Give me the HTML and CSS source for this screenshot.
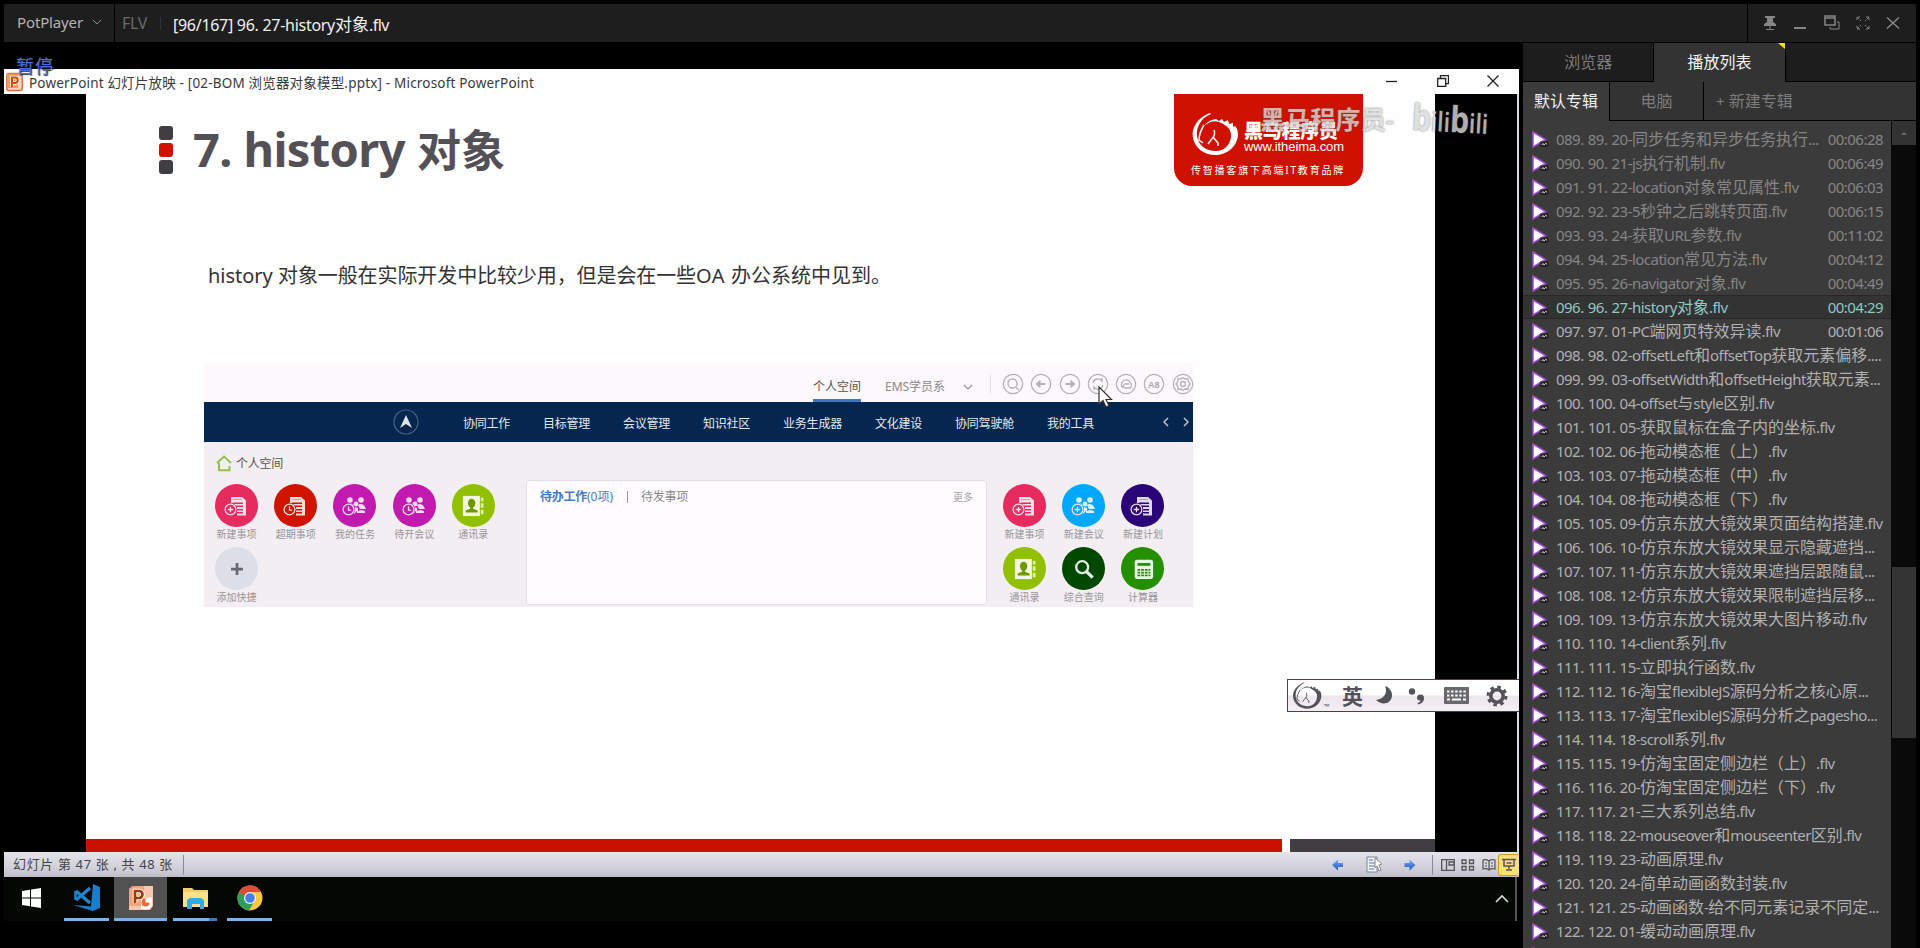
FILE: index.html
```html
<!DOCTYPE html>
<html lang="zh-CN">
<head>
<meta charset="utf-8">
<title>PotPlayer</title>
<link rel="stylesheet" href="styles.css">
</head>
<body>
<svg class="defs" aria-hidden="true">
  <defs>
    <symbol id="doc" viewBox="0 0 24 20"><path d="M6 1h11l4 3.500v15H12v-2h6v-1.500h-6v-1.500h6V13h-6v-2h6V9.500H9V8h9V6.500H8.500L6 8z" fill="#fff" opacity=".85"/><path d="M8 3.500h9" stroke="#888" opacity=".6"/></symbol>
    <symbol id="badge-plus" viewBox="0 0 12 12"><circle cx="6" cy="6" r="5" fill="none" stroke="#f6dfe8" stroke-width="1.200"/><path d="M6 3.500v5M3.500 6h5" stroke="#f6dfe8" stroke-width="1.200"/></symbol>
    <symbol id="badge-clock" viewBox="0 0 12 12"><circle cx="6" cy="6" r="5" fill="none" stroke="#f6dfe8" stroke-width="1.200"/><path d="M6 3v3.500h2.500" fill="none" stroke="#f6dfe8" stroke-width="1.200"/></symbol>
    <symbol id="people" viewBox="0 0 24 20"><g fill="#fff" opacity=".85"><circle cx="7" cy="4" r="2.800"/><circle cx="18" cy="4" r="2.800"/><circle cx="13" cy="8" r="2.400"/><path d="M3 10c1-3 6-3 8-1l-1 3zM15 9c2-2 6-1 7 2l1 2h-6zM10 14l2-3 3 1v3l3-1 4 1v2h-8v-2l-3 3z"/></g></symbol>
    <symbol id="book" viewBox="0 0 24 24"><rect x="1" y="1" width="18.500" height="22" fill="#fff" opacity=".88"/><path d="M20.500 3h3v4h-3zM20.500 9h3v5h-3zM20.500 16h3v5h-3z" fill="#fff" opacity=".7"/><ellipse cx="10.500" cy="9" rx="4" ry="5" fill="#6c9800"/><path d="M9 11h3v4l5 2v2H4v-2l5-2z" fill="#6c9800"/></symbol>
    <symbol id="play" viewBox="0 0 17 17"><path d="M1 1l12.500 7.500L1 16z" fill="#fff" stroke="#a24bd0" stroke-width="1.500"/><rect x="8" y="10.500" width="8.500" height="5.500" rx="1" fill="#262626"/><path d="M9.500 14l1.500-1.500 1 1.500 1.500-1.500 1.500.5" fill="none" stroke="#ccc" stroke-width="1"/></symbol>
    <symbol id="horse" viewBox="0 0 48 46"><path d="M19 2C6 7 0 17 2 27c2 10 11 17 22 17 12 0 22-8 23-20 0-4-1-7-3-9l-2 1 0-4-4 1-1-4-4 2-2-3-3 2-3-2c-6 1-10 4-12 7 5-4 10-6 15-4 8 3 13 8 12 15-1 8-7 14-15 14-10 0-18-6-19-15C5 16 10 7 20 3z" fill="currentColor"/><path d="M13 14c-3 5-5 10-5 15l4 3M23 19c2 4 0 7-3 10l-3 4M22 26l5 6v3" fill="none" stroke="currentColor" stroke-width="1.500"/></symbol>
    <symbol id="ring" viewBox="0 0 22 22"><circle cx="11" cy="11" r="9.700" fill="none" stroke="#b4b0b4" stroke-width="1.200"/></symbol>
    <linearGradient id="arrow" x2="0" y2="1"><stop offset="0" stop-color="#79aef5"/><stop offset="1" stop-color="#1c53c8"/></linearGradient>
  </defs>
</svg>

<header class="titlebar">
  <div class="app"><span data-w="66">PotPlayer</span><svg width="10" height="6" viewBox="0 0 10 6"><path d="M.8.800L5 5 9.200.800" fill="none" stroke="#8a8a8a"/></svg></div>
  <div class="file"><span class="kind" data-w="25">FLV</span><i></i><span class="name"><span data-w="162">[96/167] 96. 27-history</span><span class="cj">对象</span><span data-w="20">.flv</span></span></div>
  <div class="controls">
    <svg width="14" height="16" viewBox="0 0 14 16"><path d="M2 1h10v2h-2v4l3 2v2H1V9l3-2V3H2z" fill="#858585"/><path d="M7 11v4M3 14.500h8" stroke="#858585"/></svg>
    <svg width="14" height="16" viewBox="0 0 14 16"><path d="M1 13h12" stroke="#858585" stroke-width="2"/></svg>
    <svg width="16" height="16" viewBox="0 0 16 16"><path d="M1 1h10v9H1zM1 3h10" fill="none" stroke="#858585" stroke-width="1.500"/><path d="M13 7h2v7H6v-2" fill="none" stroke="#858585"/></svg>
    <svg width="14" height="16" viewBox="0 0 14 16"><path d="M1 5V2h3M10 2h3v3M13 11v3h-3M4 14H1v-3M1 2l4 4M13 2L9 6M13 14l-4-4M1 14l4-4" fill="none" stroke="#858585" stroke-dasharray="3 1"/></svg>
    <svg width="14" height="16" viewBox="0 0 14 16"><path d="M1 2.500l12 11M13 2.500L1 13.500" stroke="#909090" stroke-width="1.200"/></svg>
  </div>
</header>

<div class="main">
<section class="video">
  <div class="pause">暂停</div>
  <div class="ppt-bar">
    <svg width="18" height="20" viewBox="0 0 18 20"><rect x=".8" y="1.500" width="15.500" height="17" rx="2" fill="#fbd3bb" stroke="#dc7040" stroke-width="1.500"/><rect x="1" y="2" width="11" height="14" fill="#f39a63"/><path d="M6 15V5.500h3a2.700 2.700 0 010 5.500H6" fill="none" stroke="#fff" stroke-width="3.500"/><path d="M6 15V5.500h3a2.700 2.700 0 010 5.500H6" fill="none" stroke="#c64d12" stroke-width="2"/></svg>
    <span class="ppt-title" data-w="505">PowerPoint 幻灯片放映 - [02-BOM 浏览器对象模型.pptx] - Microsoft PowerPoint</span>
    <div class="win">
      <svg width="12" height="12"><path d="M0 6.500h11" stroke="#222" stroke-width="1.300"/></svg>
      <svg width="12" height="12"><path d="M.7 3.500h8v8h-8zM3.500 3V.700h8v8H9" fill="none" stroke="#222" stroke-width="1.300"/></svg>
      <svg width="12" height="12"><path d="M.5.500l11 11M11.500.500l-11 11" stroke="#222" stroke-width="1.300"/></svg>
    </div>
  </div>
  <div class="stage">
    <div class="slide">
      <div class="slide-head">
        <div class="dots"><i></i><i></i><i></i></div>
        <h1><span data-w="212">7. history</span><span class="h-cj">对象</span></h1>
        <div class="brand">
          <div class="brand-top"><svg width="48" height="46"><use href="#horse"/></svg><div><b data-w="100">黑马程序员</b><em data-w="100">www.itheima.com</em></div></div>
          <p data-w="154">传智播客旗下高端IT教育品牌</p>
        </div>
      </div>
      <p class="para"><span data-w="70">history </span><span data-w="418">对象一般在实际开发中比较少用，但是会在一些</span><span data-w="35">OA </span><span data-w="160">办公系统中见到。</span></p>
      <div class="oa">
        <div class="oa-top">
          <span class="on" data-w="48">个人空间</span><span class="ems" data-w="60">EMS学员系</span>
          <svg class="chev" width="10" height="6"><path d="M1 1l4 4 4-4" fill="none" stroke="#999" stroke-width="1.300"/></svg>
          <div class="rings">
            <svg viewBox="0 0 22 22"><use href="#ring"/><circle cx="10.500" cy="10.500" r="4.500"/><path d="M14 14l3 3"/></svg>
            <svg viewBox="0 0 22 22"><use href="#ring"/><path d="M15.500 11H8M10.500 8L7 11l3.500 3" stroke-width="2"/></svg>
            <svg viewBox="0 0 22 22"><use href="#ring"/><path d="M6.500 11H14M11.500 8l3.500 3-3.500 3" stroke-width="2"/></svg>
            <svg viewBox="0 0 22 22"><use href="#ring"/><path d="M6 10a5 5 0 019-2V5M16 12a5 5 0 01-9 2v3"/></svg>
            <svg viewBox="0 0 22 22"><use href="#ring"/><path d="M8 14.500a3.500 3.500 0 010-6 4 4 0 017 1c2 1 2 5-.5 5.500H10a2 2 0 011-4h3"/></svg>
            <svg viewBox="0 0 22 22"><use href="#ring"/><text x="5" y="14.500">A8</text></svg>
            <svg viewBox="0 0 22 22"><use href="#ring"/><circle cx="11" cy="11" r="2.500"/><path d="M11 4.500l2 1.500 3-.3.300 2.800 1.700 2.500-1.700 2.300-.3 2.900-3-.2-2 1.500-2-1.500-3 .2-.3-2.900L4 11l1.700-2.500.3-2.800 3 .3z"/></svg>
          </div>
        </div>
        <nav class="oa-nav">
          <svg width="26" height="26" viewBox="0 0 26 26"><circle cx="13" cy="13" r="12" fill="none" stroke="#47607f" stroke-width="1.200"/><path d="M13 6l6 13-6-4-6 4z" fill="#dfe4ec"/></svg>
          <span data-w="47">协同工作</span><span data-w="47">目标管理</span><span data-w="47">会议管理</span><span data-w="47">知识社区</span><span data-w="59">业务生成器</span><span data-w="47">文化建设</span><span data-w="59">协同驾驶舱</span><span data-w="47">我的工具</span>
          <svg class="nx" width="28" height="10"><path d="M6 1L2 5l4 4M22 1l4 4-4 4" fill="none" stroke="#b9c2d0" stroke-width="1.500"/></svg>
        </nav>
        <div class="oa-body">
          <div class="left">
            <div class="home"><svg width="16" height="17" viewBox="0 0 16 17"><path d="M3 8v7.300h10.500V11M1 8l7-6.500L15 8" fill="none" stroke="#8fc253" stroke-width="2"/></svg><span data-w="47">个人空间</span></div>
            <div class="apps">
              <div><i class="pink"><svg class="g"><use href="#doc"/></svg><svg class="b"><use href="#badge-plus"/></svg></i>新建事项</div>
              <div><i class="red"><svg class="g"><use href="#doc"/></svg><svg class="b"><use href="#badge-clock"/></svg></i>超期事项</div>
              <div><i class="purple"><svg class="g"><use href="#people"/></svg><svg class="b"><use href="#badge-clock"/></svg></i>我的任务</div>
              <div><i class="purple"><svg class="g"><use href="#people"/></svg><svg class="b"><use href="#badge-clock"/></svg></i>待开会议</div>
              <div><i class="lime"><svg class="g"><use href="#book"/></svg></i>通讯录</div>
              <div><i class="pale"><svg class="g" viewBox="0 0 24 24"><path d="M12 5.500v13M5.500 12h13" stroke="#68686f" stroke-width="3"/></svg></i>添加快捷</div>
            </div>
          </div>
          <div class="card"><b data-w="47">待办工作</b><span class="blue" data-w="26">(0项)</span><span class="bar"></span><span class="wait" data-w="47">待发事项</span><span class="more">更多</span></div>
          <div class="apps right">
            <div><i class="pink"><svg class="g"><use href="#doc"/></svg><svg class="b"><use href="#badge-plus"/></svg></i>新建事项</div>
            <div><i class="sky"><svg class="g"><use href="#people"/></svg><svg class="b"><use href="#badge-plus"/></svg></i>新建会议</div>
            <div><i class="navy"><svg class="g"><use href="#doc"/></svg><svg class="b"><use href="#badge-plus"/></svg></i>新建计划</div>
            <div><i class="lime"><svg class="g"><use href="#book"/></svg></i>通讯录</div>
            <div><i class="forest"><svg class="g" viewBox="0 0 24 24"><circle cx="10" cy="10" r="6.500" fill="none" stroke="#e6efe6" stroke-width="2.500"/><path d="M14.500 14.500l7 7" stroke="#e6efe6" stroke-width="3.500"/></svg></i>综合查询</div>
            <div><i class="green"><svg class="g" viewBox="0 0 24 24"><rect x="3" y="2" width="20" height="21" rx="2.500" fill="#e9f4e6"/><path d="M6 7h14" stroke="#249000" stroke-width="3"/><path d="M6 13h14M6 16h14M6 19h14" stroke="#249000" stroke-width="1.800" stroke-dasharray="3 1"/></svg></i>计算器</div>
          </div>
        </div>
        <svg class="cursor" width="15" height="22" viewBox="0 0 15 22"><path d="M1 1v17l4-3.500 3 6.500 3-1.500-3-6h5.500z" fill="#fff" stroke="#333" stroke-width="1.200"/></svg>
      </div>
      <div class="slide-foot"><i></i><i></i></div>
    </div>
    <div class="watermark"><span data-w="134">黑马程序员-</span><span class="bili"><b>b</b>ili<b>b</b>ili</span></div>
    <div class="ime">
      <svg class="hm" width="30" height="29"><use href="#horse"/></svg><small>™</small><b>英</b>
      <svg width="17" height="19" viewBox="0 0 17 19"><path d="M9 0c3 7-1 13-9 14 6 6 16 4 16-5 0-4-3-8-7-9z" fill="#55535a"/></svg>
      <svg width="18" height="18" viewBox="0 0 18 18"><circle cx="4" cy="4.500" r="3.200" fill="#55535a"/><path d="M9 11a3.500 3.500 0 117 0c0 4-3 6-6 6.500l-.5-1.500c2-.5 3-1.500 3-2.500-2 .3-3.500-.8-3.500-2.500z" fill="#55535a"/></svg>
      <svg width="25" height="17" viewBox="0 0 25 17"><rect width="25" height="17" rx="1" fill="#6a686e"/><path d="M3 4.500h19M3 8.500h19" stroke="#fff" stroke-width="2.200" stroke-dasharray="2.400 1.700"/><path d="M3 12.500h3M8 12.500h9M19 12.500h3" stroke="#fff" stroke-width="2"/></svg>
      <svg width="22" height="22" viewBox="0 0 22 22"><circle cx="11" cy="11" r="6.200" fill="none" stroke="#55535a" stroke-width="3.600"/><circle cx="11" cy="11" r="9" fill="none" stroke="#55535a" stroke-width="3" stroke-dasharray="3.534 3.534"/></svg>
    </div>
  </div>
  <div class="status">
    <span class="count" data-w="160">幻灯片 第 47 张 , 共 48 张</span><i class="sep"></i>
    <div class="views">
      <svg width="12" height="12"><path d="M0 6l6-5.500V4h5v4H6v3.500z" fill="url(#arrow)"/></svg>
      <svg class="pg" width="19" height="18" viewBox="0 0 19 18"><path d="M2 1h10v15H2z" fill="#eef2f8" stroke="#7d8596"/><path d="M4 4h4M4 7h6M4 10h6M4 13h5" stroke="#5c7ba8"/><path d="M10 2l7 6-3 1 2 5-2 1-2-5-2 2z" fill="#fff" stroke="#888"/></svg>
      <svg width="12" height="12"><path d="M11.500 6l-6-5.500V4H.5v4h5v3.500z" fill="url(#arrow)"/></svg>
      <i class="sep"></i>
      <svg width="14" height="12"><path d="M.7.700h12.600v10.600H.700zM5.500 1v10M8 3h5v3H8z" fill="none" stroke="#555" stroke-width="1.300"/></svg>
      <svg width="14" height="12"><path d="M1 1h4v3.500H1zM8.500 1h4v3.500h-4zM1 7.500h4V11H1zM8.500 7.500h4V11h-4z" fill="none" stroke="#555" stroke-width="1.300"/></svg>
      <svg width="14" height="12"><path d="M7 2C5 .5 3 .500 1 1v9c2-.5 4-.5 6 1 2-1.500 4-1.500 6-1V1c-2-.5-4-.5-6 1zM7 2v9M3 4h2M3 7h2M9 4h2M9 7h2" fill="none" stroke="#555" stroke-width="1.200"/></svg>
      <div class="show"><svg width="14" height="13"><path d="M0 1.500h14M2 2v6h10V2M7 8v3M4 12h6M4.500 5h5" fill="none" stroke="#555" stroke-width="1.500"/></svg></div>
    </div>
  </div>
  <div class="taskbar">
    <div class="task start"><svg width="19" height="20" viewBox="0 0 19 20"><path d="M0 3l8-1.200V9.500H0zM9 1.600L19 0v9.500H9zM0 10.500h8v7.700L0 17zM9 10.500h10V20l-10-1.600z" fill="#fff"/></svg></div>
    <div class="task code"><svg width="27" height="27" viewBox="0 0 27 27"><path d="M20 0l7 3v21l-7 3L0 21l18 1.500z" fill="#1580cf"/><path d="M3 7l14 12M3 16L17 4" stroke="#1c87d4" stroke-width="3.200"/><path d="M2.500 7v9" stroke="#1c87d4" stroke-width="2.500"/></svg></div>
    <div class="task active"><svg width="26" height="26" viewBox="0 0 26 26"><path d="M5 1h20v20l-3 4H1V4z" fill="#f7c8ae"/><path d="M1 4l4-3h11v20H1z" fill="#f2a47c"/><path d="M13 15l11-3v9l-3 3h-8z" fill="#fff"/><path d="M17.500 13.500a4 4 0 104 4h-4z" fill="#e46b3d"/><path d="M7 18V6h4a3.500 3.500 0 010 7H7" fill="none" stroke="#fff" stroke-width="4.500"/><path d="M7 18V6h4a3.500 3.500 0 010 7H7" fill="none" stroke="#9c3c10" stroke-width="2.700"/></svg></div>
    <div class="task folder"><svg width="25" height="22" viewBox="0 0 25 22"><path d="M0 1h9l2 2h14v17H0z" fill="#f3cf67"/><path d="M0 5h25v15H0z" fill="#fce08a"/><path d="M4 22v-9l3-2h11l3 2v9h-4v-5H9v5z" fill="#35a9e3"/></svg></div>
    <div class="task chrome"><svg width="26" height="26" viewBox="0 0 26 26"><circle cx="13" cy="13" r="12.500" fill="#fbc93d"/><path d="M13 13L2.200 6.700A12.500 12.500 0 0011.900 25.400L17 17z" fill="#2f9e5a"/><path d="M2.200 6.700A12.500 12.500 0 0123.900 7H13a6 6 0 00-5.500 4z" fill="#df4a3b"/><circle cx="13" cy="13" r="6" fill="#f4f4f4"/><circle cx="13" cy="13" r="4.800" fill="#437fe8"/></svg></div>
    <svg class="up" width="14" height="9"><path d="M1 8l6-6 6 6" fill="none" stroke="#ddd" stroke-width="1.600"/></svg>
  </div>
</section>

<aside class="side">
  <div class="tabs"><div>浏览器</div><div class="cur">播放列表<svg width="7" height="6"><path d="M0 0h7v6z" fill="#ffe100"/></svg></div><div></div></div>
  <div class="albums"><div class="cur">默认专辑</div><div>电脑</div><div class="add"><span>+</span> 新建专辑</div></div>
  <div class="list"><div class="rows" id="rows"></div><div class="scroll"><div class="sup"><svg width="6" height="4"><path d="M0 4l3-3.500L6 4z" fill="#666"/></svg></div><div class="thumb"></div></div></div>
</aside>
</div>
<script src="main.js"></script>
</body>
</html>
```

FILE: main.js
```js
const items = [
  ["089. 89. 20-同步任务和异步任务执行...", "00:06:28"],
  ["090. 90. 21-js执行机制.flv", "00:06:49"],
  ["091. 91. 22-location对象常见属性.flv", "00:06:03"],
  ["092. 92. 23-5秒钟之后跳转页面.flv", "00:06:15"],
  ["093. 93. 24-获取URL参数.flv", "00:11:02"],
  ["094. 94. 25-location常见方法.flv", "00:04:12"],
  ["095. 95. 26-navigator对象.flv", "00:04:49"],
  ["096. 96. 27-history对象.flv", "00:04:29"],
  ["097. 97. 01-PC端网页特效异读.flv", "00:01:06"],
  ["098. 98. 02-offsetLeft和offsetTop获取元素偏移...."],
  ["099. 99. 03-offsetWidth和offsetHeight获取元素..."],
  ["100. 100. 04-offset与style区别.flv"],
  ["101. 101. 05-获取鼠标在盒子内的坐标.flv"],
  ["102. 102. 06-拖动模态框（上）.flv"],
  ["103. 103. 07-拖动模态框（中）.flv"],
  ["104. 104. 08-拖动模态框（下）.flv"],
  ["105. 105. 09-仿京东放大镜效果页面结构搭建.flv"],
  ["106. 106. 10-仿京东放大镜效果显示隐藏遮挡..."],
  ["107. 107. 11-仿京东放大镜效果遮挡层跟随鼠..."],
  ["108. 108. 12-仿京东放大镜效果限制遮挡层移..."],
  ["109. 109. 13-仿京东放大镜效果大图片移动.flv"],
  ["110. 110. 14-client系列.flv"],
  ["111. 111. 15-立即执行函数.flv"],
  ["112. 112. 16-淘宝flexibleJS源码分析之核心原..."],
  ["113. 113. 17-淘宝flexibleJS源码分析之pagesho..."],
  ["114. 114. 18-scroll系列.flv"],
  ["115. 115. 19-仿淘宝固定侧边栏（上）.flv"],
  ["116. 116. 20-仿淘宝固定侧边栏（下）.flv"],
  ["117. 117. 21-三大系列总结.flv"],
  ["118. 118. 22-mouseover和mouseenter区别.flv"],
  ["119. 119. 23-动画原理.flv"],
  ["120. 120. 24-简单动画函数封装.flv"],
  ["121. 121. 25-动画函数-给不同元素记录不同定..."],
  ["122. 122. 01-缓动动画原理.flv"],
  [""]
];
const current = 7;

document.getElementById("rows").innerHTML = items.map(([name, time = ""], i) => {
  const state = i < current ? "played" : i === current ? "playing" : "";
  const label = name.replace(/[\x20-\x7e]+/g, s => `<span class="latin">${s}</span>`);
  return `<div class="row ${state}"><svg width="17" height="17"><use href="#play"/></svg><span class="title">${label}</span><span class="latin time">${time}</span></div>`;
}).join("");

// Track each label so that it fills the width given in data-w.
document.querySelectorAll("[data-w]").forEach(el => {
  const extra = el.dataset.w - el.getBoundingClientRect().width;
  el.style.letterSpacing = extra / el.textContent.length + "px";
});
```

FILE: styles.css
```css
* { box-sizing: border-box; }
body { margin: 0; height: 948px; background: #000; overflow: hidden; padding: 4px 4px 0; display: flex; flex-direction: column; font-family: "Noto Sans", "Noto Sans CJK SC", sans-serif; font-size: 16px; }
svg { display: block; flex: none; }
i, em { font-style: normal; }
p, h1 { margin: 0; }
[data-w] { display: inline-block; white-space: pre; }
.defs { position: absolute; width: 0; height: 0; }

.titlebar { display: flex; gap: 1px; height: 38px; flex: none; }
.titlebar > div { background: #1e1e1e; display: flex; align-items: center; }
.app { width: 110px; flex: none; padding: 0 0 2px 13px; gap: 9px; color: #b4b4b4; font-size: 15px; }
.file { flex: 1; padding-left: 7px; font-size: 16px; }
.kind { color: #6a6a6a; }
.file i { width: 1px; height: 13px; background: #333; margin: 0 12px 0 13px; }
.name { color: #f0f0f0; white-space: nowrap; }
.cj { font-size: 17px; }
.controls { width: 168px; padding: 0 16px 0 15px; justify-content: space-between; }

.main { display: flex; flex: 1; min-height: 0; padding-top: 1px; }
.video { position: relative; width: 1515px; flex: none; margin-right: 4px; padding-top: 26px; }
.pause { position: absolute; left: 12px; top: 10px; font-size: 18px; line-height: 26px; letter-spacing: 1px; color: #4a70e0; text-shadow: 1px 1px 1px #223; z-index: 2; }
.ppt-bar { height: 25px; background: #fefefe; display: flex; align-items: center; padding-left: 2px; color: #3a3a3a; }
.ppt-title { font-size: 13.500px; margin-left: 5px; }
.win { display: flex; gap: 38.500px; margin-left: auto; padding-right: 20px; padding-bottom: 2px; }
.stage { position: relative; height: 758px; background: #000; border-right: 2px solid #dcdce8; padding-left: 82px; }
.slide { width: 1349px; height: 758px; background: #fefefe; display: flex; flex-direction: column; }
.slide-head { display: flex; height: 92px; flex: none; padding-left: 73px; }
.dots { display: flex; flex-direction: column; gap: 3px; padding-top: 32px; width: 14px; }
.dots i { height: 14px; border-radius: 3px; background: #403e43; }
.dots i:nth-child(2) { background: #cf1100; }
h1 { margin-left: 20px; width: 981px; flex: none; white-space: nowrap; font-size: 47px; line-height: 60px; padding-top: 25px; color: #545156; }
.slide-head h1 > span { line-height: 60px; }
.h-cj { font-size: 44px; margin-left: 12px; }
.brand { width: 189px; height: 92px; background: #ce1100; border-radius: 0 0 18px 18px; padding: 17px 0 0 17px; color: #fff; }
.brand-top { display: flex; gap: 5px; }
.brand-top div { display: flex; flex-direction: column; }
.brand b { font: 900 19px/20px "Noto Sans CJK SC", sans-serif; margin-top: 9px; }
.brand em { font: 13px/13px "Liberation Sans", sans-serif; }
.brand p { font-size: 10px; line-height: 14px; margin-top: 2px; }
.brand .brand-top + p { width: max-content; }
.para { padding: 75px 0 0 122px; font-size: 20px; line-height: 30px; color: #333; white-space: nowrap; height: 177px; }

.oa { position: relative; width: 989px; height: 244px; margin-left: 118px; background: #f3eef2; font-size: 12px; }
.oa-top { height: 39px; background: #fcf8fb; display: flex; color: #8b888c; padding-left: 609px; }
.oa-top span { line-height: 18px; padding-top: 15px; height: 39px; }
.oa-top .on { color: #555; border-bottom: 3px solid #3b78bd; }
.oa-top .ems { margin-left: 24px; }
.chev { margin: 21px 0 0 18px; }
.rings { display: flex; gap: 6.300px; margin-left: 17px; border-left: 1px solid #e2dee2; height: 18px; margin-top: 12px; padding-left: 11px; }
.rings > svg { width: 22px; height: 22px; margin-top: -2px; fill: none; stroke: #b4b0b4; stroke-width: 1.300; }
.rings text { fill: #aaa6aa; stroke: none; font: bold 9px "Liberation Sans", sans-serif; }
.oa-nav { height: 40px; background: #05264e; color: #e4e8ef; display: flex; align-items: center; gap: 33px; padding-left: 189px; }
.oa-nav > svg:first-child { margin-right: 11px; }
.oa-nav span { padding-top: 2px; }
.nx { margin-left: auto; margin-right: 3px; }
.oa-body { display: flex; height: 165px; }
.left { width: 322px; flex: none; padding: 12px 0 0 3px; }
.home { display: flex; gap: 4px; padding-left: 9px; height: 18px; align-items: center; color: #555; }
.apps { display: grid; grid-template-columns: repeat(5, 59.200px); grid-auto-rows: 63px; margin-top: 12px; font-size: 10px; line-height: 15px; text-align: center; color: #98949a; }
.apps i { position: relative; width: 43px; height: 43px; border-radius: 50%; margin: 0 auto; display: flex; align-items: center; justify-content: center; }
.g { width: 24px; height: 22px; }
.b { position: absolute; left: 9px; top: 19px; width: 13px; height: 13px; border-radius: 50%; background: inherit; }
.pink { background: #e62b5f; }
.red { background: #d01400; }
.purple { background: #c21aae; }
.lime { background: #90c000; }
.pale { background: #dcdee8; }
.sky { background: #00a8fc; }
.navy { background: #2a0578; }
.forest { background: #004800; }
.green { background: #249000; }
.card { width: 461px; flex: none; height: 125px; margin-top: 38px; border: 1px solid #e4dfe6; border-radius: 3px; background: #fefcfe; padding: 7px 13px 0; display: flex; line-height: 18px; color: #8b888c; align-items: flex-start; }
.card b { font-weight: 600; color: #477cc4; }
.blue { color: #477cc4; }
.bar { width: 1px; height: 12px; background: #999; margin: 3px 13px 0 14px; }
.more { margin-left: auto; font-size: 10px; color: #a5a1a6; }
.right { grid-template-columns: repeat(3, 59.200px); margin: 42px 0 0 8px; }
.cursor { position: absolute; left: 894px; top: 23px; }
.slide-foot { margin-top: auto; display: flex; justify-content: space-between; height: 13px; }
.slide-foot i { width: 1196px; background: #cc1000; }
.slide-foot i:last-child { width: 145px; background: #403e40; }

.watermark { position: absolute; left: 1256px; top: 6px; display: flex; align-items: center; height: 36px; gap: 18px; color: #dadada; opacity: .8; font-size: 25px; text-shadow: 0 0 2px #555; font-weight: 600; white-space: nowrap; }
.bili { font: 600 27px/36px "Open Sans", sans-serif; letter-spacing: 0; transform: rotate(3deg) scaleX(.84); transform-origin: left; }
.bili b { font-size: 36px; font-weight: 700; }
.ime { position: absolute; left: 1283px; top: 585px; width: 232px; height: 33px; border: 1px solid #4b4048; border-right: 0; background: linear-gradient(#fff 0 48%, #ede6ec 52%, #f4eef4); display: flex; align-items: center; padding-left: 4px; color: #55535a; }
.ime small { font-size: 7px; align-self: flex-end; width: 10px; margin-left: 2px; }
.ime b { font-size: 21px; width: 22px; margin-left: 8px; line-height: 30px; }
.ime b + svg { margin-left: 12px; }
.ime b ~ svg ~ svg { margin-left: 15px; }
.ime b ~ svg ~ svg ~ svg { margin-left: 18px; }
.ime b ~ svg ~ svg ~ svg ~ svg { margin-left: 17px; }

.status { height: 25px; background: linear-gradient(#e4e4ec, #cfced8 70%, #bfbec8); display: flex; align-items: center; padding-left: 9px; font-size: 13px; color: #444; }
.count { padding-bottom: 2px; }
.sep { width: 1px; height: 20px; background: #8c8b95; margin-left: 10px; }
.views { margin-left: auto; display: flex; align-items: center; height: 25px; }
.pg { margin: 0 20px 0 21px; }
.views .sep { margin: 0 8px 0 16px; }
.views .sep ~ svg { margin-right: 6.500px; }
.show { width: 21px; height: 22px; margin-left: -4px; border: 1px solid #d59b22; border-right: 0; border-radius: 3px 0 0 3px; background: linear-gradient(#fbd98a, #ffe36a); display: flex; align-items: center; justify-content: center; }
.taskbar { height: 44px; background: #040704; display: flex; border-right: 2px solid #555; margin-right: 2px; }
.task { height: 44px; display: flex; align-items: center; justify-content: center; border-bottom: 3px solid #76b3ee; }
.start { border-color: transparent; width: 44px; margin: 0 11px 0 5px; }
.code { width: 45px; }
.active { width: 53px; margin: 0 6px 0 5px; background: #525252; }
.folder { width: 44px; margin-right: 10px; border-style: solid; border-width: 0 0 3px; border-image: linear-gradient(90deg, #76b3ee 78%, #3d7ab8 78%) 3; }
.chrome { width: 45px; }
.up { margin: 17px 6px 0 auto; }

.side { width: 393px; display: flex; flex-direction: column; }
.tabs, .albums { display: flex; gap: 1px; height: 38px; margin-bottom: 1px; flex: none; color: #7c7c7c; }
.tabs > div { background: #1d1d1d; width: 130px; line-height: 38px; text-align: center; flex: 1; }
.tabs .cur { position: relative; background: #333; color: #f2f2f2; height: 39px; }
.tabs svg { position: absolute; right: 0; top: 0; }
.albums > div { background: #333; width: 93px; line-height: 38px; text-align: center; }
.albums .cur { width: 86px; background: #3b3b3b; color: #f2f2f2; height: 39px; }
.albums .add { flex: 1; text-align: left; padding-left: 12px; }
.add span { font-size: 15px; }
.list { flex: 1; min-height: 0; display: flex; background: #0a0a0a; }
.rows { width: 368px; background: #3b3b3b; padding-top: 6px; overflow: hidden; margin-right: 1px; }
.row { height: 24px; display: flex; align-items: center; padding: 0 8px 0 9px; color: #b0b0b0; line-height: 23px; white-space: pre; border: 1px solid transparent; border-width: 1px 0; }
.title { margin-left: 7px; }
.latin { font-size: 15px; letter-spacing: -.53px; word-spacing: .8px; }
.time { margin-left: auto; }
.played { color: #858585; }
.playing { background: #333; border-color: #282828; color: #8ec9c3; }
.scroll { width: 24px; }
.sup { height: 24px; background: #333; display: flex; align-items: center; justify-content: center; }
.thumb { margin-top: 422px; height: 171px; background: #343434; }
```
